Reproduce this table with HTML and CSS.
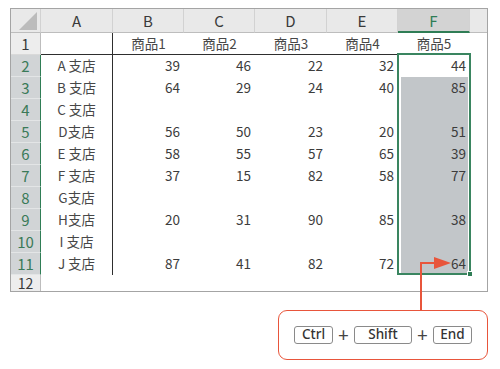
FILE: index.html
```html
<!DOCTYPE html>
<html lang="ja">
<head>
<meta charset="utf-8">
<title>Ctrl+Shift+End</title>
<link rel="stylesheet" href="styles.css">
</head>
<body>
<div class="page">
  <div class="sheet">
    <div class="c hd corner"><svg width="18" height="18" viewBox="0 0 18 18"><polygon points="18,0 18,18 0,18" fill="#bcbcbc"/></svg></div>
    <div class="c hd">A</div><div class="c hd">B</div><div class="c hd">C</div><div class="c hd">D</div><div class="c hd">E</div><div class="c hd hd-sel">F</div><div class="c hd hd-end"></div>

    <div class="c rh">1</div><div class="c t bl bb"></div><div class="c t bb">商品1</div><div class="c t bb">商品2</div><div class="c t bb">商品3</div><div class="c t bb">商品4</div><div class="c t">商品5</div><div class="c"></div>

    <div class="c rh sel">2</div><div class="c t bl">A 支店</div><div class="c n">39</div><div class="c n">46</div><div class="c n">22</div><div class="c n">32</div><div class="c n">44</div><div class="c"></div>
    <div class="c rh sel">3</div><div class="c t bl">B 支店</div><div class="c n">64</div><div class="c n">29</div><div class="c n">24</div><div class="c n">40</div><div class="c n sf">85</div><div class="c"></div>
    <div class="c rh sel">4</div><div class="c t bl">C 支店</div><div class="c n"></div><div class="c n"></div><div class="c n"></div><div class="c n"></div><div class="c n sf"></div><div class="c"></div>
    <div class="c rh sel">5</div><div class="c t bl">D支店</div><div class="c n">56</div><div class="c n">50</div><div class="c n">23</div><div class="c n">20</div><div class="c n sf">51</div><div class="c"></div>
    <div class="c rh sel">6</div><div class="c t bl">E 支店</div><div class="c n">58</div><div class="c n">55</div><div class="c n">57</div><div class="c n">65</div><div class="c n sf">39</div><div class="c"></div>
    <div class="c rh sel">7</div><div class="c t bl">F 支店</div><div class="c n">37</div><div class="c n">15</div><div class="c n">82</div><div class="c n">58</div><div class="c n sf">77</div><div class="c"></div>
    <div class="c rh sel">8</div><div class="c t bl">G支店</div><div class="c n"></div><div class="c n"></div><div class="c n"></div><div class="c n"></div><div class="c n sf"></div><div class="c"></div>
    <div class="c rh sel">9</div><div class="c t bl">H支店</div><div class="c n">20</div><div class="c n">31</div><div class="c n">90</div><div class="c n">85</div><div class="c n sf">38</div><div class="c"></div>
    <div class="c rh sel">10</div><div class="c t bl">I 支店</div><div class="c n"></div><div class="c n"></div><div class="c n"></div><div class="c n"></div><div class="c n sf"></div><div class="c"></div>
    <div class="c rh sel">11</div><div class="c t bl">J 支店</div><div class="c n">87</div><div class="c n">41</div><div class="c n">82</div><div class="c n">72</div><div class="c n sf sf-last">64</div><div class="c"></div>

    <div class="c rh last">12</div><div class="c"></div><div class="c"></div><div class="c"></div><div class="c"></div><div class="c"></div><div class="c"></div><div class="c"></div>
  </div>

  <div class="selection"><span class="handle"></span></div>

  <svg class="arrow" width="500" height="369" viewBox="0 0 500 369">
    <polyline points="421,311 421,263 436,263" fill="none" stroke="#e8553b" stroke-width="2"/>
    <polygon points="434,257 451,263 434,269" fill="#e8553b"/>
  </svg>

  <div class="callout">
    <span class="key key-s">Ctrl</span><span class="plus">+</span><span class="key key-l">Shift</span><span class="plus">+</span><span class="key key-s">End</span>
  </div>
</div>
</body>
</html>
```
FILE: styles.css
```css
* { box-sizing: border-box; }
html, body { margin: 0; padding: 0; background: #fff; }
body {
  width: 500px;
  height: 369px;
  overflow: hidden;
  font-family: "Noto Sans CJK JP", "Noto Sans", sans-serif;
  color: #3c3c3c;
}
.page { position: relative; width: 500px; height: 369px; padding-top: 8px; }

.sheet {
  margin-left: 10px;
  width: 478px;
  display: grid;
  grid-template-columns: 30px 72px 71px 71px 72px 71px 72px 17px;
  grid-template-rows: 24px repeat(11, 22px) 16px;
  border: 1px solid #a4a4a4;
  background: #fff;
}
.c {
  display: flex;
  align-items: center;
  font-size: 13.5px;
  line-height: 1;
  overflow: hidden;
  white-space: pre;
}
.t { justify-content: center; color: #474747; }
.n { justify-content: flex-end; padding-right: 4px; }
.bl { border-right: 1px solid #2e2e2e; }
.bb { border-bottom: 1px solid #2e2e2e; }

.hd {
  background: #e9e9e9;
  border-right: 1px solid #d2d2d2;
  border-bottom: 1px solid #bdbdbd;
  justify-content: center;
  font-size: 15px;
  color: #3a3a3a;
}
.corner { justify-content: flex-end; align-items: flex-end; padding: 0 3px 2px 0; }
.hd-sel {
  background: #d3d3d3;
  border-bottom: 2px solid #2f7d55;
  color: #2f7d55;
}
.hd-end { border-right: none; }

.rh {
  background: #ededed;
  border-right: 1px solid #bdbdbd;
  border-bottom: 1px solid #d9d9d9;
  justify-content: center;
  font-size: 15px;
  color: #3a3a3a;
}
.rh.sel {
  background: #d1d4d6;
  border-right: 1px solid #2f7d55;
  border-bottom: 1px solid #e3e5e6;
  color: #3a7a58;
}
.rh.last {
  align-items: flex-start;
  padding-top: 1px;
  font-size: 14px;
  line-height: 14px;
  border-bottom: none;
  overflow: visible;
}

.sf {
  background: #c2c6c9;
  box-shadow: inset 3px 0 #fff, inset -2px 0 #fff;
}
.sf-last { box-shadow: inset 3px 0 #fff, inset -2px 0 #fff, inset 0 -2px #fff; }

.selection {
  position: absolute;
  left: 397px;
  top: 53px;
  width: 74px;
  height: 222px;
  border: 2px solid #3a8560;
}
.handle {
  position: absolute;
  right: -4px;
  bottom: -4px;
  width: 6px;
  height: 6px;
  background: #2f7d55;
  border: 1px solid #fff;
}

.arrow { position: absolute; left: 0; top: 0; pointer-events: none; }

.callout {
  margin: 18px 0 0 278px;
  width: 210px;
  height: 50px;
  border: 1.5px solid #e8553b;
  border-radius: 9px;
  display: flex;
  align-items: center;
  justify-content: center;
  gap: 3px;
  background: #fff;
}
.key {
  height: 18px;
  border: 1px solid #8a8a8a;
  border-radius: 3px;
  display: flex;
  align-items: center;
  justify-content: center;
  font-family: "Noto Sans", "Open Sans", sans-serif;
  font-size: 13.5px;
  font-weight: 500;
  color: #333;
  line-height: 1;
}
.key-s { width: 39px; }
.key-l { width: 58px; }
.plus {
  width: 15px;
  text-align: center;
  font-family: "Noto Sans", sans-serif;
  font-size: 19px;
  line-height: 1;
  color: #444;
}
```
